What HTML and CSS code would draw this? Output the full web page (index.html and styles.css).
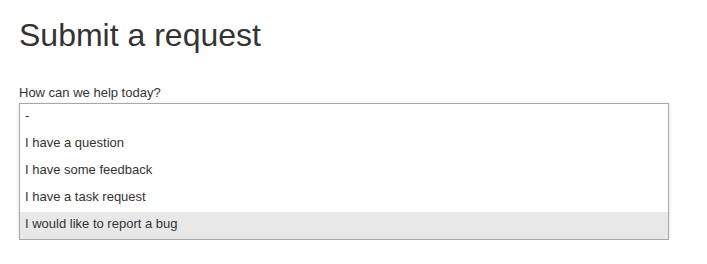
FILE: index.html
```html
<!DOCTYPE html>
<html lang="en">
<head>
<meta charset="utf-8">
<title>Submit a request</title>
<link rel="stylesheet" href="styles.css">
</head>
<body>
<main class="page">
  <h1 class="title">Submit a request</h1>
  <label class="field-label">How can we help today?</label>
  <ul class="dropdown">
    <li class="option">-</li>
    <li class="option">I have a question</li>
    <li class="option">I have some feedback</li>
    <li class="option">I have a task request</li>
    <li class="option option--active">I would like to report a bug</li>
  </ul>
</main>
</body>
</html>
```

FILE: styles.css
```css
html, body {
  margin: 0;
  padding: 0;
  background: #ffffff;
}

body {
  font-family: "Liberation Sans", Arial, Helvetica, sans-serif;
  color: #333333;
}

.page {
  display: flex;
  flex-direction: column;
  align-items: flex-start;
  padding: 17px 0 0 19px;
}

.title {
  margin: 0;
  font-size: 32px;
  line-height: 36px;
  font-weight: normal;
  color: #333333;
}

.field-label {
  display: block;
  margin-top: 30px;
  margin-bottom: 1px;
  font-size: 13px;
  line-height: 19px;
  color: #333333;
}

.dropdown {
  list-style: none;
  margin: 0;
  padding: 0;
  width: 650px;
  box-sizing: border-box;
  border: 1px solid #a8a8a8;
  background: #ffffff;
  box-shadow: 0 1px 4px rgba(0, 0, 0, 0.12);
}

.option {
  font-size: 13px;
  line-height: 15px;
  padding: 4px 6px 8px 5px;
  color: #333333;
}

.option--active {
  background: #e8e8e8;
}
```
